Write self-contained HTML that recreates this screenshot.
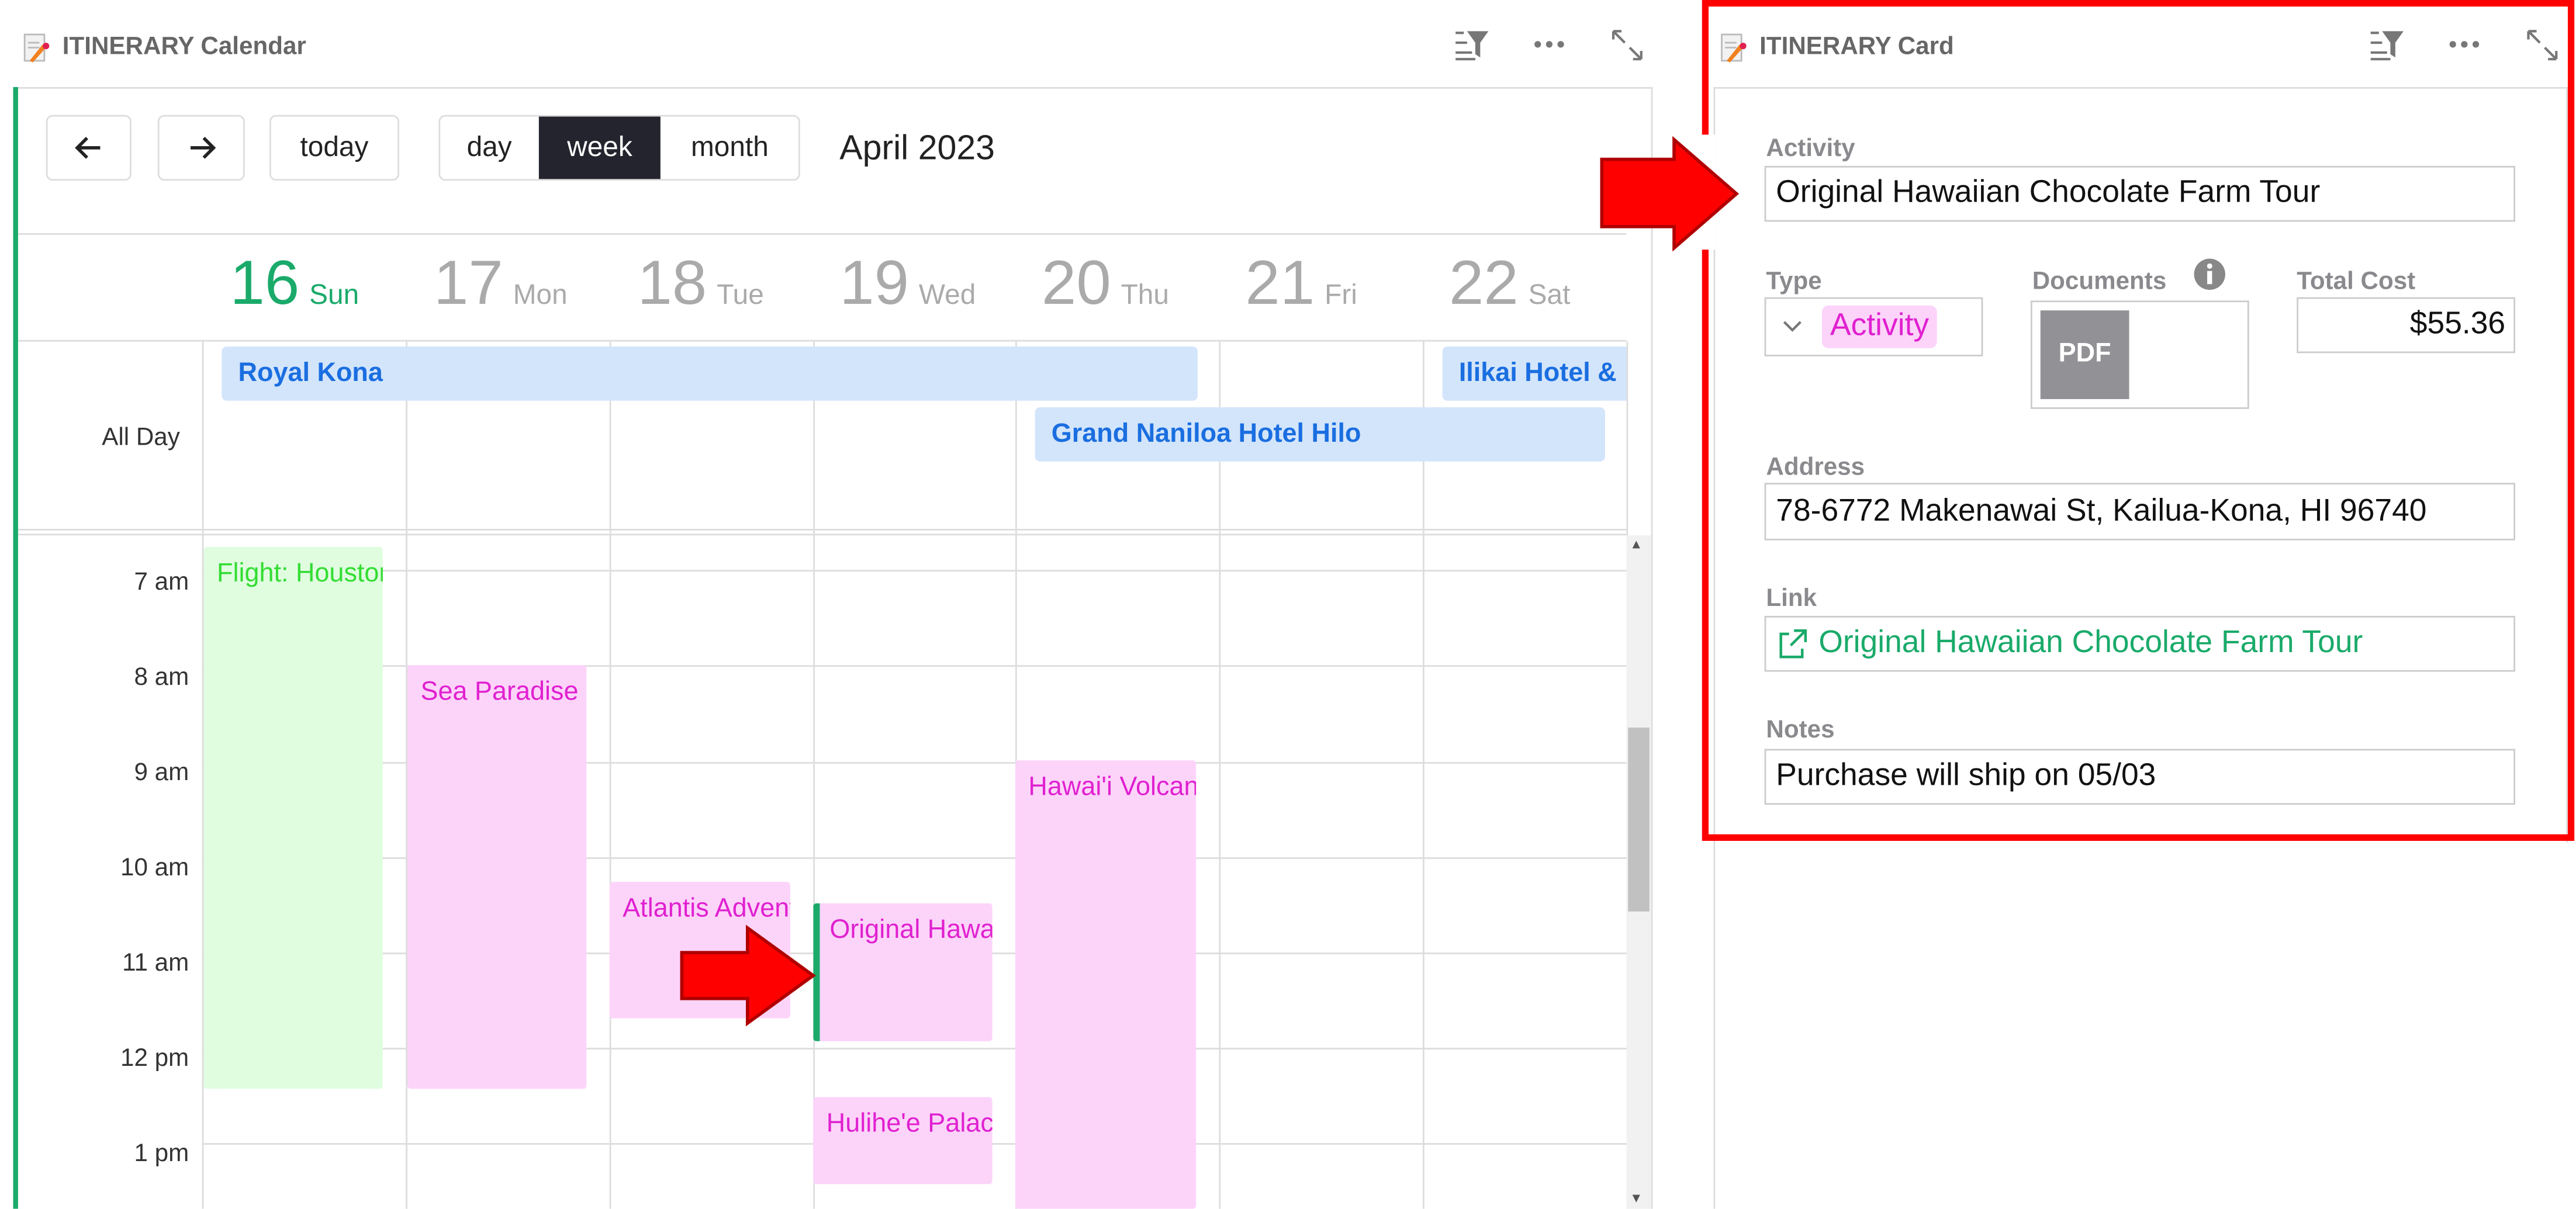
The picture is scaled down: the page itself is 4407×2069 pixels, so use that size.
<!DOCTYPE html>
<html><head><meta charset="utf-8"><style>
html,body{margin:0;padding:0;background:#fff;overflow:hidden;width:4407px;height:2069px}
#w{position:absolute;left:0;top:0;width:1568px;height:736px;transform:scale(2.8106);transform-origin:0 0;font-family:"Liberation Sans",sans-serif}
.a{position:absolute}
.hl{position:absolute;height:1px;background:#ddd}
.vl{position:absolute;width:1px;background:#ddd}
.btn{position:absolute;top:70px;height:40px;border:1px solid #ddd;border-radius:4px;box-sizing:border-box;font-size:17px;color:#222;display:flex;align-items:center;justify-content:center;background:#fff}
.dn{position:absolute;top:152px;font-size:38px;color:#aaa}
.dn span{font-size:17px;margin-left:6px}
.ev{position:absolute;background:#fcd4fa;color:#e020d0;font-size:16px;padding:8px 0 0 8px;box-sizing:border-box;overflow:hidden;white-space:nowrap;border-radius:2px}
.ad{position:absolute;background:#d3e5fb;color:#1a6ee0;font-weight:bold;font-size:16px;padding:0 10px;box-sizing:border-box;height:33px;line-height:33px;border-radius:3px;overflow:hidden;white-space:nowrap}
.tl{position:absolute;left:40px;width:75px;text-align:right;font-size:15px;color:#333}
.lab{position:absolute;font-size:15px;font-weight:bold;color:#8a8a8e}
.inp{position:absolute;border:1px solid #ccc;box-sizing:border-box;font-size:19px;color:#111;padding-left:6px;display:flex;align-items:center;background:#fff}
.hd{position:absolute;top:20px;font-size:15px;font-weight:bold;color:#666}
</style></head><body><div id="w">
<!-- left header -->
<svg class="a" style="left:14px;top:20px" width="18" height="20"><rect x="1" y="1" width="12" height="16" fill="#f2f2f2" stroke="#bbb"/><line x1="3" y1="6" x2="10" y2="6" stroke="#bbb"/><line x1="3" y1="9" x2="10" y2="9" stroke="#bbb"/><path d="M4 17 L12 7 L14 9 L6 18 Z" fill="#f08020"/><circle cx="14" cy="8" r="2" fill="#e02050"/></svg>
<div class="hd" style="left:38px">ITINERARY Calendar</div>
<svg class="a" style="left:884px;top:16px" width="120" height="22" fill="none" stroke="#777" stroke-width="1.5"><line x1="2" y1="4" x2="7" y2="4"/><line x1="2" y1="10" x2="9" y2="10"/><line x1="2" y1="16" x2="12" y2="16"/><line x1="2" y1="20" x2="14" y2="20"/><path d="M9 3 H22 L17 10 V19 L14 17 V10 Z" fill="#777" stroke="none"/><circle cx="52" cy="11" r="2" fill="#777" stroke="none"/><circle cx="59" cy="11" r="2" fill="#777" stroke="none"/><circle cx="66" cy="11" r="2" fill="#777" stroke="none"/><path d="M98 3 L105 10 M98 3 V8 M98 3 H103 M115 20 L108 13 M115 20 V15 M115 20 H110"/></svg>
<!-- calendar frame -->
<div class="hl" style="left:8px;top:53px;width:997px"></div>
<div class="a" style="left:8px;top:53px;width:3px;height:683px;background:#1aaa6a"></div>
<div class="vl" style="left:1005px;top:53px;height:683px"></div>
<div class="btn" style="left:28px;width:52px"><svg width="18" height="18" fill="none" stroke="#222" stroke-width="2"><path d="M16 9 H3 M8 3 L2 9 L8 15"/></svg></div>
<div class="btn" style="left:96px;width:53px"><svg width="18" height="18" fill="none" stroke="#222" stroke-width="2"><path d="M2 9 H15 M10 3 L16 9 L10 15"/></svg></div>
<div class="btn" style="left:164px;width:79px">today</div>
<div class="btn" style="left:267px;width:220px;justify-content:flex-start;overflow:hidden"><div style="width:60px;text-align:center">day</div><div style="width:75px;height:40px;background:#24242e;color:#fff;display:flex;align-items:center;justify-content:center">week</div><div style="width:84px;text-align:center">month</div></div>
<div class="a" style="left:511px;top:79px;font-size:21px;color:#222">April 2023</div>
<div class="hl" style="left:11px;top:142px;width:979px"></div>
<div class="dn" style="left:140px;color:#1aaa6a">16<span>Sun</span></div>
<div class="dn" style="left:264px">17<span>Mon</span></div>
<div class="dn" style="left:388px">18<span>Tue</span></div>
<div class="dn" style="left:511px">19<span>Wed</span></div>
<div class="dn" style="left:634px">20<span>Thu</span></div>
<div class="dn" style="left:758px">21<span>Fri</span></div>
<div class="dn" style="left:882px">22<span>Sat</span></div>
<div class="hl" style="left:11px;top:207px;width:979px"></div>
<div class="hl" style="left:11px;top:322px;width:979px"></div>
<div class="hl" style="left:11px;top:325px;width:979px"></div>
<div class="vl" style="left:123px;top:208px;height:528px"></div>
<div class="vl" style="left:247px;top:208px;height:528px"></div>
<div class="vl" style="left:371px;top:208px;height:528px"></div>
<div class="vl" style="left:495px;top:208px;height:528px"></div>
<div class="vl" style="left:618px;top:208px;height:528px"></div>
<div class="vl" style="left:742px;top:208px;height:528px"></div>
<div class="vl" style="left:866px;top:208px;height:528px"></div>
<div class="vl" style="left:990px;top:208px;height:528px"></div>
<div class="a" style="left:62px;top:258px;font-size:15px;color:#333">All Day</div>
<div class="ad" style="left:135px;top:211px;width:594px">Royal Kona</div>
<div class="ad" style="left:878px;top:211px;width:112px;border-radius:3px 0 0 3px">Ilikai Hotel &amp;</div>
<div class="ad" style="left:630px;top:248px;width:347px">Grand Naniloa Hotel Hilo</div>
<div class="hl" style="left:123px;top:347px;width:867px"></div>
<div class="hl" style="left:123px;top:405px;width:867px"></div>
<div class="hl" style="left:123px;top:464px;width:867px"></div>
<div class="hl" style="left:123px;top:522px;width:867px"></div>
<div class="hl" style="left:123px;top:580px;width:867px"></div>
<div class="hl" style="left:123px;top:638px;width:867px"></div>
<div class="hl" style="left:123px;top:696px;width:867px"></div>
<div class="tl" style="top:346px">7 am</div>
<div class="tl" style="top:404px">8 am</div>
<div class="tl" style="top:462px">9 am</div>
<div class="tl" style="top:520px">10 am</div>
<div class="tl" style="top:578px">11 am</div>
<div class="tl" style="top:636px">12 pm</div>
<div class="tl" style="top:694px">1 pm</div>
<div class="ev" style="left:124px;top:333px;width:109px;height:330px;background:#e0fde0;color:#33dd33">Flight: Houston</div>
<div class="ev" style="left:248px;top:405px;width:109px;height:258px">Sea Paradise</div>
<div class="ev" style="left:371px;top:537px;width:110px;height:83px">Atlantis Adventures</div>
<div class="ev" style="left:495px;top:550px;width:109px;height:84px;border-left:4px solid #1aaa6a;padding-left:6px">Original Hawaiian</div>
<div class="ev" style="left:495px;top:668px;width:109px;height:53px">Hulihe'e Palace</div>
<div class="ev" style="left:618px;top:463px;width:110px;height:273px">Hawai'i Volcanoes</div>
<div class="a" style="left:990px;top:326px;width:15px;height:410px;background:#f1f1f1"></div>
<div class="a" style="left:991px;top:443px;width:13px;height:112px;background:#c1c1c1"></div>
<div class="a" style="left:992px;top:327px;font-size:8px;color:#555">▲</div>
<div class="a" style="left:992px;top:725px;font-size:8px;color:#555">▼</div>
<svg class="a" style="left:413px;top:563px" width="86" height="62"><path d="M2 17 H42 V2 L82 31 L42 60 V45 H2 Z" fill="#ff0000" stroke="#b00000" stroke-width="2"/></svg>
<!-- right panel -->
<div class="vl" style="left:1043px;top:53px;height:683px"></div>
<div class="vl" style="left:1562px;top:53px;height:460px"></div>
<div class="hl" style="left:1043px;top:53px;width:519px"></div>
<svg class="a" style="left:1047px;top:20px" width="18" height="20"><rect x="1" y="1" width="12" height="16" fill="#f2f2f2" stroke="#bbb"/><line x1="3" y1="6" x2="10" y2="6" stroke="#bbb"/><line x1="3" y1="9" x2="10" y2="9" stroke="#bbb"/><path d="M4 17 L12 7 L14 9 L6 18 Z" fill="#f08020"/><circle cx="14" cy="8" r="2" fill="#e02050"/></svg>
<div class="hd" style="left:1071px">ITINERARY Card</div>
<svg class="a" style="left:1441px;top:16px" width="120" height="22" fill="none" stroke="#777" stroke-width="1.5"><line x1="2" y1="4" x2="7" y2="4"/><line x1="2" y1="10" x2="9" y2="10"/><line x1="2" y1="16" x2="12" y2="16"/><line x1="2" y1="20" x2="14" y2="20"/><path d="M9 3 H22 L17 10 V19 L14 17 V10 Z" fill="#777" stroke="none"/><circle cx="52" cy="11" r="2" fill="#777" stroke="none"/><circle cx="59" cy="11" r="2" fill="#777" stroke="none"/><circle cx="66" cy="11" r="2" fill="#777" stroke="none"/><path d="M98 3 L105 10 M98 3 V8 M98 3 H103 M115 20 L108 13 M115 20 V15 M115 20 H110"/></svg>
<div class="lab" style="left:1075px;top:82px">Activity</div>
<div class="inp" style="left:1074px;top:101px;width:457px;height:34px">Original Hawaiian Chocolate Farm Tour</div>
<div class="lab" style="left:1075px;top:163px">Type</div>
<div class="inp" style="left:1074px;top:181px;width:133px;height:36px"><svg width="22" height="12" fill="none" stroke="#777" stroke-width="1.5"><path d="M5 3 L10 8 L15 3"/></svg><span style="background:#fcd4fa;color:#e020d0;border-radius:4px;padding:2px 5px;margin-left:6px">Activity</span></div>
<div class="lab" style="left:1237px;top:163px">Documents</div>
<svg class="a" style="left:1335px;top:157px" width="20" height="20"><circle cx="10" cy="10" r="9.5" fill="#888"/><rect x="8.5" y="8" width="3" height="8" fill="#fff"/><circle cx="10" cy="5" r="1.6" fill="#fff"/></svg>
<div class="inp" style="left:1236px;top:183px;width:133px;height:66px;padding:0"></div>
<div class="a" style="left:1242px;top:189px;width:54px;height:54px;background:#929296;color:#fff;font-weight:bold;font-size:16px;display:flex;align-items:center;justify-content:center">PDF</div>
<div class="lab" style="left:1398px;top:163px">Total Cost</div>
<div class="inp" style="left:1398px;top:181px;width:133px;height:34px;justify-content:flex-end;padding-right:5px">$55.36</div>
<div class="lab" style="left:1075px;top:276px">Address</div>
<div class="inp" style="left:1074px;top:294px;width:457px;height:35px">78-6772 Makenawai St, Kailua-Kona, HI 96740</div>
<div class="lab" style="left:1075px;top:356px">Link</div>
<div class="inp" style="left:1074px;top:375px;width:457px;height:34px;color:#1aaa6a"><svg width="22" height="20" fill="none" stroke="#1aaa6a" stroke-width="1.6" style="margin-right:4px"><path d="M8 4 H3 V18 H16 V13 M11 2 H18 V9 M18 2 L9 11"/></svg>Original Hawaiian Chocolate Farm Tour</div>
<div class="lab" style="left:1075px;top:436px">Notes</div>
<div class="inp" style="left:1074px;top:456px;width:457px;height:34px">Purchase will ship on 05/03</div>
<div class="a" style="left:1036px;top:0;width:531px;height:512px;box-sizing:border-box;border:4px solid #ff0000"></div>
<div class="a" style="left:1030px;top:82px;width:14px;height:70px;background:#fff"></div>
<svg class="a" style="left:973px;top:83px" width="88" height="70"><path d="M2 14 H46 V2 L84 35 L46 68 V55 H2 Z" fill="#ff0000" stroke="#b00000" stroke-width="2"/></svg>
</div></body></html>
